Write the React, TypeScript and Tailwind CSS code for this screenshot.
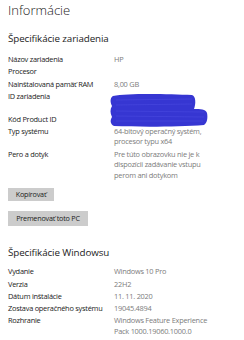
import React from "react";

const Row = ({ label, value, lines }: { label: string; value?: React.ReactNode; lines?: number }) => (
  <div className="flex">
    <div className="w-[106px] shrink-0 text-[#1b1b1b] whitespace-nowrap">{label}</div>
    <div className="w-[110px] text-[#7c7c7c] whitespace-nowrap" style={lines ? { minHeight: `${lines * 10.5}px` } : undefined}>
      {value}
    </div>
  </div>
);

export default function App() {
  return (
    <div className="w-[244px] h-[340px] bg-white overflow-hidden pl-[8px] font-['Open_Sans',sans-serif] relative">
      <div className="text-[13px] font-light leading-[20px] text-[#222]">Informácie</div>
      <div className="mt-[12px] text-[9.8px] tracking-[-0.1px] leading-[14px] text-[#222]">Špecifikácie zariadenia</div>
      <div className="mt-[8px] flex flex-col gap-[1.8px] text-[7.4px] tracking-[-0.25px] leading-[10.5px]">
        <Row label="Názov zariadenia" value="HP" />
        <Row label="Procesor" value="" />
        <Row label="Nainštalovaná pamäť RAM" value="8,00 GB" />
        <Row label="ID zariadenia" lines={2} />
        <Row label="Kód Product ID" lines={1} />
        <Row label="Typ systému" value={<>64-bitový operačný systém,<br />procesor typu x64</>} />
        <Row label="Pero a dotyk" value={<>Pre túto obrazovku nie je k<br />dispozícii zadávanie vstupu<br />perom ani dotykom</>} />
      </div>
      <div className="mt-[8px] flex flex-col items-start gap-[10px] text-[7.2px] tracking-[-0.2px] text-[#1b1b1b]">
        <div className="h-[13px] w-[46px] bg-[#cccccc] flex items-center justify-center leading-none">Kopírovať</div>
        <div className="h-[15px] w-[80px] bg-[#cccccc] flex items-center justify-center leading-none">Premenovať toto PC</div>
      </div>
      <div className="mt-[20px] text-[9.8px] tracking-[-0.1px] leading-[14px] text-[#222]">Špecifikácie Windowsu</div>
      <div className="mt-[6px] flex flex-col gap-[1.8px] text-[7.4px] tracking-[-0.25px] leading-[10.5px]">
        <Row label="Vydanie" value="Windows 10 Pro" />
        <Row label="Verzia" value="22H2" />
        <Row label="Dátum inštalácie" value="11. 11. 2020" />
        <Row label="Zostava operačného systému" value="19045.4894" />
        <Row label="Rozhranie" value={<>Windows Feature Experience<br />Pack 1000.19060.1000.0</>} />
      </div>
      <svg className="absolute left-[108px] top-[90px]" width="104" height="40" viewBox="0 0 104 40">
        <path
          d="M5 6 C20 3 60 4 84 5 C88 6 88 14 86 19 C92 19 98 19 99 23 C100 28 99 33 96 35 C70 37 30 37 6 36 C2 34 2 30 4 27 C2 23 2 19 4 16 C2 12 2 8 5 6 Z"
          fill="#3636d2"
        />
        <path d="M8 10 L84 9 M8 15 L84 14 M8 21 L96 22 M8 26 L96 27 M8 31 L95 31" stroke="#4a4ae0" strokeWidth="1.2" fill="none" opacity="0.6" />
      </svg>
    </div>
  );
}
